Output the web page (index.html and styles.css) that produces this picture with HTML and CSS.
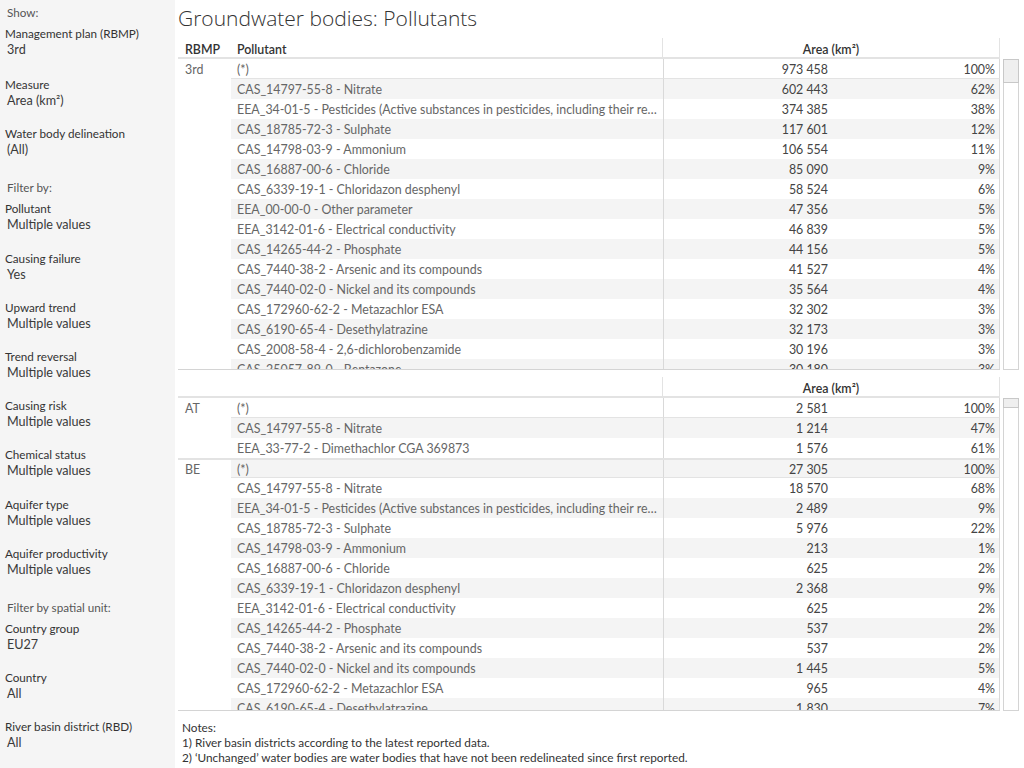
FILE: index.html
```html
<!DOCTYPE html>
<html lang="en">
<head>
  <meta charset="utf-8" />
  <title>Groundwater bodies: Pollutants</title>
  <link rel="stylesheet" href="styles.css">
</head>
<body>
<div class="dash">
  <aside class="side">
    <div class="sec-head first">Show:</div>
    <div class="filter wide"><div class="lbl">Management plan (RBMP)</div><div class="val">3rd</div></div>
    <div class="filter"><div class="lbl">Measure</div><div class="val">Area (km²)</div></div>
    <div class="filter"><div class="lbl">Water body delineation</div><div class="val">(All)</div></div>

    <div class="sec-head">Filter by:</div>
    <div class="filter"><div class="lbl">Pollutant</div><div class="val">Multiple values</div></div>
    <div class="filter"><div class="lbl">Causing failure</div><div class="val">Yes</div></div>
    <div class="filter"><div class="lbl">Upward trend</div><div class="val">Multiple values</div></div>
    <div class="filter"><div class="lbl">Trend reversal</div><div class="val">Multiple values</div></div>
    <div class="filter"><div class="lbl">Causing risk</div><div class="val">Multiple values</div></div>
    <div class="filter"><div class="lbl">Chemical status</div><div class="val">Multiple values</div></div>
    <div class="filter"><div class="lbl">Aquifer type</div><div class="val">Multiple values</div></div>
    <div class="filter"><div class="lbl">Aquifer productivity</div><div class="val">Multiple values</div></div>

    <div class="sec-head">Filter by spatial unit:</div>
    <div class="filter"><div class="lbl">Country group</div><div class="val">EU27</div></div>
    <div class="filter"><div class="lbl">Country</div><div class="val">All</div></div>
    <div class="filter"><div class="lbl">River basin district (RBD)</div><div class="val">All</div></div>
  </aside>

  <main class="main">
    <h1 class="title">Groundwater bodies: Pollutants</h1>

    <!-- sheet 1: totals for the whole plan -->
    <div class="sheet">
      <div class="table">
        <div class="hrow">
          <div class="c-rb">RBMP</div>
          <div class="c-pol">Pollutant</div>
          <div class="c-area">Area (km²)</div>
        </div>
        <div class="pane top-pane">
          <div class="row sub"><div class="c-rb">3rd</div><div class="c-pol">(*)</div><div class="c-num">973 458</div><div class="c-pct">100%</div></div>
          <div class="row band"><div class="c-rb"></div><div class="c-pol">CAS_14797-55-8 - Nitrate</div><div class="c-num">602 443</div><div class="c-pct">62%</div></div>
          <div class="row"><div class="c-rb"></div><div class="c-pol">EEA_34-01-5 - Pesticides (Active substances in pesticides, including their relevant metabolites)</div><div class="c-num">374 385</div><div class="c-pct">38%</div></div>
          <div class="row band"><div class="c-rb"></div><div class="c-pol">CAS_18785-72-3 - Sulphate</div><div class="c-num">117 601</div><div class="c-pct">12%</div></div>
          <div class="row"><div class="c-rb"></div><div class="c-pol">CAS_14798-03-9 - Ammonium</div><div class="c-num">106 554</div><div class="c-pct">11%</div></div>
          <div class="row band"><div class="c-rb"></div><div class="c-pol">CAS_16887-00-6 - Chloride</div><div class="c-num">85 090</div><div class="c-pct">9%</div></div>
          <div class="row"><div class="c-rb"></div><div class="c-pol">CAS_6339-19-1 - Chloridazon desphenyl</div><div class="c-num">58 524</div><div class="c-pct">6%</div></div>
          <div class="row band"><div class="c-rb"></div><div class="c-pol">EEA_00-00-0 - Other parameter</div><div class="c-num">47 356</div><div class="c-pct">5%</div></div>
          <div class="row"><div class="c-rb"></div><div class="c-pol">EEA_3142-01-6 - Electrical conductivity</div><div class="c-num">46 839</div><div class="c-pct">5%</div></div>
          <div class="row band"><div class="c-rb"></div><div class="c-pol">CAS_14265-44-2 - Phosphate</div><div class="c-num">44 156</div><div class="c-pct">5%</div></div>
          <div class="row"><div class="c-rb"></div><div class="c-pol">CAS_7440-38-2 - Arsenic and its compounds</div><div class="c-num">41 527</div><div class="c-pct">4%</div></div>
          <div class="row band"><div class="c-rb"></div><div class="c-pol">CAS_7440-02-0 - Nickel and its compounds</div><div class="c-num">35 564</div><div class="c-pct">4%</div></div>
          <div class="row"><div class="c-rb"></div><div class="c-pol">CAS_172960-62-2 - Metazachlor ESA</div><div class="c-num">32 302</div><div class="c-pct">3%</div></div>
          <div class="row band"><div class="c-rb"></div><div class="c-pol">CAS_6190-65-4 - Desethylatrazine</div><div class="c-num">32 173</div><div class="c-pct">3%</div></div>
          <div class="row"><div class="c-rb"></div><div class="c-pol">CAS_2008-58-4 - 2,6-dichlorobenzamide</div><div class="c-num">30 196</div><div class="c-pct">3%</div></div>
          <div class="row band"><div class="c-rb"></div><div class="c-pol">CAS_25057-89-0 - Bentazone</div><div class="c-num">30 180</div><div class="c-pct">3%</div></div>
        </div>
      </div>
      <div class="scroll top-scroll"><div class="thumb"></div></div>
    </div>

    <!-- sheet 2: by country -->
    <div class="sheet second">
      <div class="table">
        <div class="hrow">
          <div class="c-rb"></div>
          <div class="c-pol"></div>
          <div class="c-area">Area (km²)</div>
        </div>
        <div class="pane bottom-pane">
          <div class="row sub"><div class="c-rb">AT</div><div class="c-pol">(*)</div><div class="c-num">2 581</div><div class="c-pct">100%</div></div>
          <div class="row band"><div class="c-rb"></div><div class="c-pol">CAS_14797-55-8 - Nitrate</div><div class="c-num">1 214</div><div class="c-pct">47%</div></div>
          <div class="row"><div class="c-rb"></div><div class="c-pol">EEA_33-77-2 - Dimethachlor CGA 369873</div><div class="c-num">1 576</div><div class="c-pct">61%</div></div>
          <div class="row sub band grp"><div class="c-rb">BE</div><div class="c-pol">(*)</div><div class="c-num">27 305</div><div class="c-pct">100%</div></div>
          <div class="row"><div class="c-rb"></div><div class="c-pol">CAS_14797-55-8 - Nitrate</div><div class="c-num">18 570</div><div class="c-pct">68%</div></div>
          <div class="row band"><div class="c-rb"></div><div class="c-pol">EEA_34-01-5 - Pesticides (Active substances in pesticides, including their relevant metabolites)</div><div class="c-num">2 489</div><div class="c-pct">9%</div></div>
          <div class="row"><div class="c-rb"></div><div class="c-pol">CAS_18785-72-3 - Sulphate</div><div class="c-num">5 976</div><div class="c-pct">22%</div></div>
          <div class="row band"><div class="c-rb"></div><div class="c-pol">CAS_14798-03-9 - Ammonium</div><div class="c-num">213</div><div class="c-pct">1%</div></div>
          <div class="row"><div class="c-rb"></div><div class="c-pol">CAS_16887-00-6 - Chloride</div><div class="c-num">625</div><div class="c-pct">2%</div></div>
          <div class="row band"><div class="c-rb"></div><div class="c-pol">CAS_6339-19-1 - Chloridazon desphenyl</div><div class="c-num">2 368</div><div class="c-pct">9%</div></div>
          <div class="row"><div class="c-rb"></div><div class="c-pol">EEA_3142-01-6 - Electrical conductivity</div><div class="c-num">625</div><div class="c-pct">2%</div></div>
          <div class="row band"><div class="c-rb"></div><div class="c-pol">CAS_14265-44-2 - Phosphate</div><div class="c-num">537</div><div class="c-pct">2%</div></div>
          <div class="row"><div class="c-rb"></div><div class="c-pol">CAS_7440-38-2 - Arsenic and its compounds</div><div class="c-num">537</div><div class="c-pct">2%</div></div>
          <div class="row band"><div class="c-rb"></div><div class="c-pol">CAS_7440-02-0 - Nickel and its compounds</div><div class="c-num">1 445</div><div class="c-pct">5%</div></div>
          <div class="row"><div class="c-rb"></div><div class="c-pol">CAS_172960-62-2 - Metazachlor ESA</div><div class="c-num">965</div><div class="c-pct">4%</div></div>
          <div class="row band"><div class="c-rb"></div><div class="c-pol">CAS_6190-65-4 - Desethylatrazine</div><div class="c-num">1 830</div><div class="c-pct">7%</div></div>
        </div>
      </div>
      <div class="scroll bottom-scroll"><div class="thumb small"></div></div>
    </div>

    <div class="notes">
      <div>Notes:</div>
      <div>1) River basin districts according to the latest reported data.</div>
      <div>2) ‘Unchanged’ water bodies are water bodies that have not been redelineated since first reported.</div>
    </div>
  </main>
</div>
</body>
</html>
```

FILE: styles.css
```css
body {
  margin: 0;
  font-family: Lato, "Open Sans", sans-serif;
  font-size: 12.4px;
  color: #333;
  background: #fff;
}
.dash {
  display: flex;
  width: 1024px;
  height: 768px;
  overflow: hidden;
}

/* left filter panel */
.side {
  width: 175px;
  flex-shrink: 0;
  background: #f5f5f5;
  padding-top: 4px;
  box-sizing: border-box;
}
.sec-head {
  height: 21px;
  margin-top: 5px;
  padding-left: 7px;
  line-height: 16px;
  font-size: 11.7px;
  color: #555;
}
.sec-head.first {
  margin-top: 0;
}
.filter {
  height: 49.2px;
  padding-left: 5px;
}
.filter.wide {
  height: 51px;
}
.filter .lbl {
  line-height: 17px;
  font-size: 11.7px;
  color: #333;
}
.filter .val {
  line-height: 16px;
  padding-left: 2px;
  font-size: 12.6px;
  color: #3a3a3a;
}

/* main area */
.main {
  flex: 1;
  padding-left: 3px;
  padding-top: 6px;
}
.title {
  margin: 0 0 8px 0;
  font-family: "Open Sans", Lato, sans-serif;
  font-size: 21px;
  font-weight: 300;
  line-height: 24px;
  color: #333;
}
.sheet {
  display: flex;
  gap: 3px;
}
.sheet.second {
  margin-top: 7px;
}
.table {
  width: 822px;
}
.hrow {
  display: flex;
  height: 19px;
  border-bottom: 2px solid #e3e3e3;
  font-weight: 600;
  color: #333;
  line-height: 23px;
}
.hrow .c-pol {
  border-right: 1px solid #e3e3e3;
}
.hrow .c-area {
  width: 336px;
  text-align: center;
  border-right: 1px solid #e3e3e3;
}
.c-rb {
  width: 53px;
  flex-shrink: 0;
  padding-left: 7px;
  box-sizing: border-box;
}
.c-pol {
  width: 432px;
  flex-shrink: 0;
  padding: 0 6px;
  box-sizing: border-box;
  overflow: hidden;
  white-space: nowrap;
  text-overflow: ellipsis;
}
.c-num {
  width: 169px;
  padding-right: 4px;
  box-sizing: border-box;
  text-align: right;
  border-left: 1px solid #d9d9d9;
}
.c-pct {
  width: 168px;
  padding-right: 4px;
  box-sizing: border-box;
  text-align: right;
  border-right: 1px solid #d9d9d9;
}
.pane {
  overflow: hidden;
  border-bottom: 1px solid #d4d4d4;
}
.top-pane {
  height: 310px;
}
.bottom-pane {
  height: 312px;
}
.row {
  display: flex;
  height: 20px;
  box-sizing: border-box;
  line-height: 22px;
  color: #666;
}
.row > div {
  box-sizing: border-box;
}
.row .c-num,
.row .c-pct {
  color: #444;
}
.row.band .c-pol,
.row.band .c-num,
.row.band .c-pct {
  background: #f4f4f4;
}
.row.sub .c-pol,
.row.sub .c-num,
.row.sub .c-pct {
  border-bottom: 1px solid #e3e3e3;
}
.row.grp {
  border-top: 2px solid #e3e3e3;
  line-height: 20px;
}

/* scrollbars */
.scroll {
  width: 16px;
  box-sizing: border-box;
  border: 1px solid #d4d4d4;
  border-top: none;
  background: #fff;
}
.top-scroll {
  margin-top: 21px;
  height: 311px;
}
.bottom-scroll {
  margin-top: 21px;
  height: 313px;
}
.thumb {
  height: 24px;
  margin: 0 -1px;
  background: #efefef;
  border: 1px solid #c8c8c8;
  box-sizing: border-box;
}
.thumb.small {
  height: 10px;
}

.notes {
  margin-top: 9px;
  padding-left: 4px;
  font-size: 11.8px;
  line-height: 15px;
  color: #333;
}
```
